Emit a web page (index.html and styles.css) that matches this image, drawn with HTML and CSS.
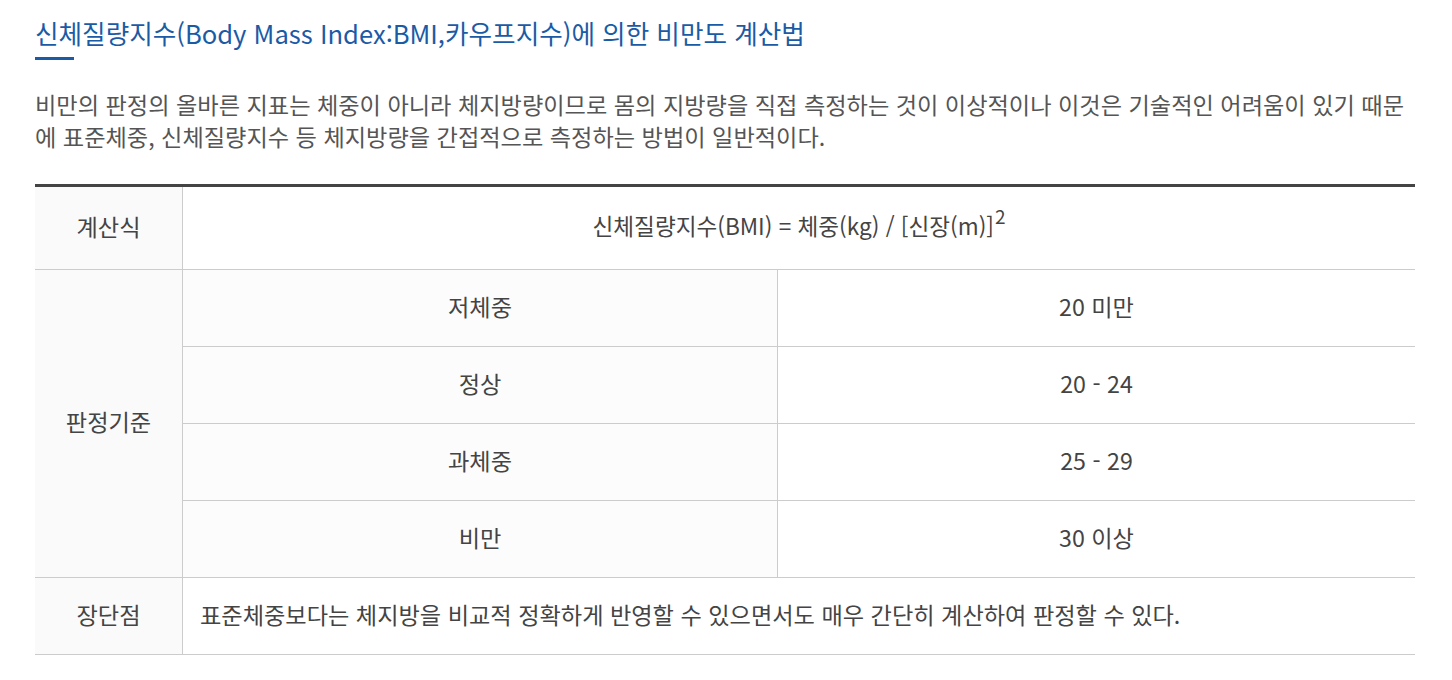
FILE: index.html
```html
<!DOCTYPE html>
<html lang="ko">
<head>
<meta charset="utf-8">
<title>BMI</title>
<link rel="stylesheet" href="styles.css">
</head>
<body>
<div class="wrap">
  <h2 class="title">신체질량지수(Body Mass Index:BMI,카우프지수)에 의한 비만도 계산법</h2>
  <div class="title-bar"></div>
  <p class="desc">비만의 판정의 올바른 지표는 체중이 아니라 체지방량이므로 몸의 지방량을 직접 측정하는 것이 이상적이나 이것은 기술적인 어려움이 있기 때문에 표준체중, 신체질량지수 등 체지방량을 간접적으로 측정하는 방법이 일반적이다.</p>
  <div class="grid">
    <div class="th">계산식</div>
    <div class="td span2 formula">신체질량지수(BMI) = 체중(kg) / [신장(m)]<sup>2</sup></div>
    <div class="th rows4">판정기준</div>
    <div class="td sub">저체중</div>
    <div class="td">20 미만</div>
    <div class="td sub">정상</div>
    <div class="td">20 - 24</div>
    <div class="td sub">과체중</div>
    <div class="td">25 - 29</div>
    <div class="td sub">비만</div>
    <div class="td">30 이상</div>
    <div class="th">장단점</div>
    <div class="td span2 left">표준체중보다는 체지방을 비교적 정확하게 반영할 수 있으면서도 매우 간단히 계산하여 판정할 수 있다.</div>
  </div>
</div>
</body>
</html>
```

FILE: styles.css
```css
* { box-sizing: border-box; }
html, body { margin: 0; padding: 0; background: #fff; }
body { font-family: "Noto Sans CJK KR", "Noto Sans", sans-serif; }
.wrap { padding: 16px 37px 0 35px; }
.title {
  margin: 0;
  font-size: 25.6px;
  line-height: 34px;
  font-weight: 400;
  color: #1b5ba6;
}
.title-bar { width: 39px; height: 3px; background: #1b5ba6; margin-top: 7px; }
.desc {
  margin: 28px 0 0;
  font-size: 23.2px;
  line-height: 32px;
  color: #555;
}
.grid {
  margin-top: 32px;
  display: grid;
  grid-template-columns: 148px 595px 637px;
  grid-template-rows: 83px repeat(5, 77px);
  border-top: 3px solid #444;
  font-size: 23.2px;
  color: #444;
}
.th, .td {
  display: flex;
  align-items: center;
  justify-content: center;
  border-bottom: 1px solid #ccc;
  padding-bottom: 5px;
}
.th { background: #fafafa; border-right: 1px solid #ccc; }
.td.sub { background: #fcfcfc; border-right: 1px solid #ccc; }
.span2 { grid-column: span 2; }
.rows4 { grid-row: span 4; }
.left { justify-content: flex-start; padding-left: 17px; }
.formula { font-size: 22.6px; }
sup {
  font-size: 19px;
  line-height: 0;
  vertical-align: baseline;
  position: relative;
  top: -10px;
  margin-left: 1px;
}
```
